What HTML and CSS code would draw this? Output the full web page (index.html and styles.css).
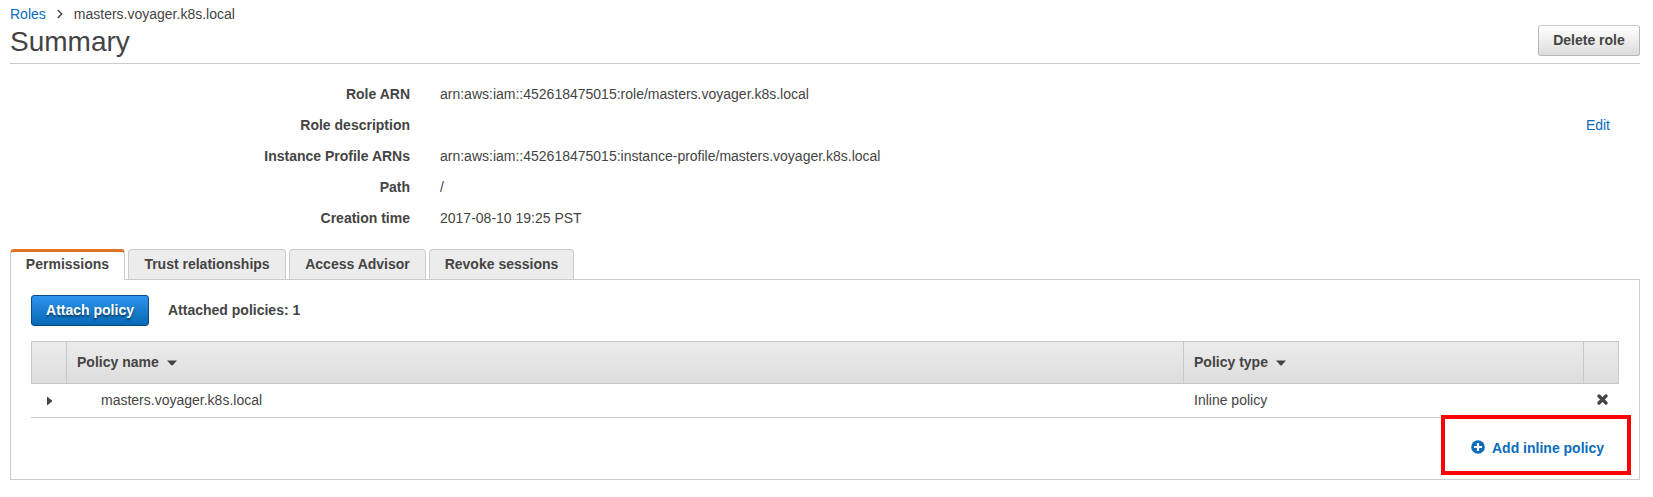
FILE: index.html
```html
<!DOCTYPE html>
<html lang="en">
<head>
<meta charset="utf-8">
<title>Summary</title>
<link rel="stylesheet" href="styles.css">
</head>
<body>
<main class="page">
  <nav class="crumbs">
    <a class="link" href="#">Roles</a>
    <svg class="crumb-sep" width="6" height="10" viewBox="0 0 6 10"><path d="M.7 1 4.8 5 .7 9" fill="none" stroke="#444" stroke-width="1.4"/></svg>
    <span>masters.voyager.k8s.local</span>
  </nav>
  <header class="heading">
    <h1>Summary</h1>
    <button class="btn">Delete role</button>
  </header>
  <dl class="details">
    <div class="detail"><dt>Role ARN</dt><dd>arn:aws:iam::452618475015:role/masters.voyager.k8s.local</dd></div>
    <div class="detail"><dt>Role description</dt><dd></dd><a class="link" href="#">Edit</a></div>
    <div class="detail"><dt>Instance Profile ARNs</dt><dd>arn:aws:iam::452618475015:instance-profile/masters.voyager.k8s.local</dd></div>
    <div class="detail"><dt>Path</dt><dd>/</dd></div>
    <div class="detail"><dt>Creation time</dt><dd>2017-08-10 19:25 PST</dd></div>
  </dl>
  <div class="tabs">
    <div class="tab active">Permissions</div>
    <div class="tab">Trust relationships</div>
    <div class="tab">Access Advisor</div>
    <div class="tab">Revoke sessions</div>
  </div>
  <section class="panel">
    <div class="toolbar">
      <button class="btn primary">Attach policy</button>
      <strong>Attached policies: 1</strong>
    </div>
    <div class="grid head">
      <div></div>
      <div class="cell">Policy name <svg width="10" height="6" viewBox="0 0 10 6"><path d="M0 .5h10L5.5 5.5h-1z" fill="#444"/></svg></div>
      <div class="cell">Policy type <svg width="10" height="6" viewBox="0 0 10 6"><path d="M0 .5h10L5.5 5.5h-1z" fill="#444"/></svg></div>
      <div></div>
    </div>
    <div class="grid row">
      <div class="icon-cell"><svg width="5" height="10" viewBox="0 0 5 10"><path d="M0 .5 5 4.5v1L0 9.5z" fill="#444"/></svg></div>
      <div class="cell name">masters.voyager.k8s.local</div>
      <div class="cell">Inline policy</div>
      <div class="icon-cell remove"><svg width="11" height="11" viewBox="0 0 11 11"><path d="m2 2 7 7M9 2 2 9" stroke="#444" stroke-width="3.3" stroke-linecap="round"/></svg></div>
    </div>
    <a class="add link" href="#">
      <svg width="14" height="14" viewBox="0 0 14 14"><circle cx="7" cy="7" r="6.8" fill="#0b6cbb"/><path d="M7 3v8M3 7h8" stroke="#fff" stroke-width="2.2"/></svg>
      <span>Add inline policy</span>
    </a>
  </section>
</main>
</body>
</html>
```
FILE: styles.css
```css
* { box-sizing: border-box; }
body {
  margin: 0;
  background: #fff;
  color: #444;
  font: 14px/20px "Liberation Sans", Arial, sans-serif;
}
.page { width: 1630px; margin-left: 10px; padding-top: 4px; }
.link { color: #0b6cbb; text-decoration: none; }
.crumbs { display: flex; align-items: center; height: 20px; }
.crumb-sep { margin: 0 11px 1px; }
.heading {
  display: flex;
  justify-content: space-between;
  align-items: flex-start;
  height: 40px;
  border-bottom: 1px solid #ccc;
}
h1 { margin: 2px 0 0; font-size: 28px; line-height: 32px; font-weight: normal; }
.btn {
  height: 31px;
  padding: 0 14px 2px;
  border: 1px solid #b8b8b8;
  border-top-color: #ccc;
  border-radius: 3px;
  background: linear-gradient(#fff, #dcdcdc);
  color: #444;
  font: bold 14px/20px "Liberation Sans", Arial, sans-serif;
}
.heading .btn { width: 102px; margin-top: 1px; }
.details { margin: 15px 0; }
.detail { display: flex; height: 31px; line-height: 31px; }
dt { width: 400px; font-weight: bold; text-align: right; }
dd { flex: 1; margin-left: 30px; }
.detail .link { margin-right: 30px; }
.tabs { display: flex; gap: 3px; height: 30px; }
.tab {
  height: 30px;
  width: 115px;
  border: 1px solid #ccc;
  border-bottom: 0;
  border-radius: 4px 4px 0 0;
  background: #ececec;
  font-weight: bold;
  line-height: 29px;
  text-align: center;
}
.tab:nth-child(2) { width: 158px; }
.tab:nth-child(3) { width: 137px; }
.tab:nth-child(4) { width: 145px; }
.tab.active {
  height: 31px;
  border-top: 3px solid #e07220;
  background: #fff;
  line-height: 25px;
  z-index: 1;
}
.panel { height: 201px; padding: 15px 20px 0; border: 1px solid #ccc; }
.toolbar { display: flex; align-items: center; gap: 19px; height: 31px; margin-bottom: 15px; }
.toolbar strong { padding-bottom: 1px; }
.btn.primary {
  width: 118px;
  border-color: #0a4a84;
  background: linear-gradient(#2e93ec, #0769b5);
  color: #fff;
  text-shadow: 0 2px 2px rgba(0, 0, 0, .5);
}
.grid { display: grid; grid-template-columns: 35px 1117px 400px 36px; }
.head {
  height: 43px;
  border: 1px solid #c8c8c8;
  grid-template-columns: 34px 1117px 400px 35px;
  background: linear-gradient(#ececec, #ddd);
  font-weight: bold;
  line-height: 41px;
}
.head > div + div { border-left: 1px solid #c8c8c8; }
.cell { display: flex; align-items: center; padding-left: 10px; }
.head .cell svg { margin: 1px 0 0 8px; }
.row { height: 34px; border-bottom: 1px solid #c8c8c8; line-height: 33px; }
.row .cell { padding-left: 11px; }
.row .name { padding-left: 35px; }
.icon-cell { display: flex; align-items: center; padding-left: 16px; }
.remove { padding-left: 14px; padding-bottom: 2px; }
/* Callout that overlaps the table's bottom edge */
.add {
  position: absolute;
  left: 1441px;
  top: 415px;
  display: flex;
  align-items: center;
  gap: 7px;
  width: 190px;
  height: 60px;
  padding-left: 26px;
  border: 4px solid #f00;
  font-weight: bold;
}
.add span { padding-top: 5px; }
.add svg { margin-top: 4px; }
```
